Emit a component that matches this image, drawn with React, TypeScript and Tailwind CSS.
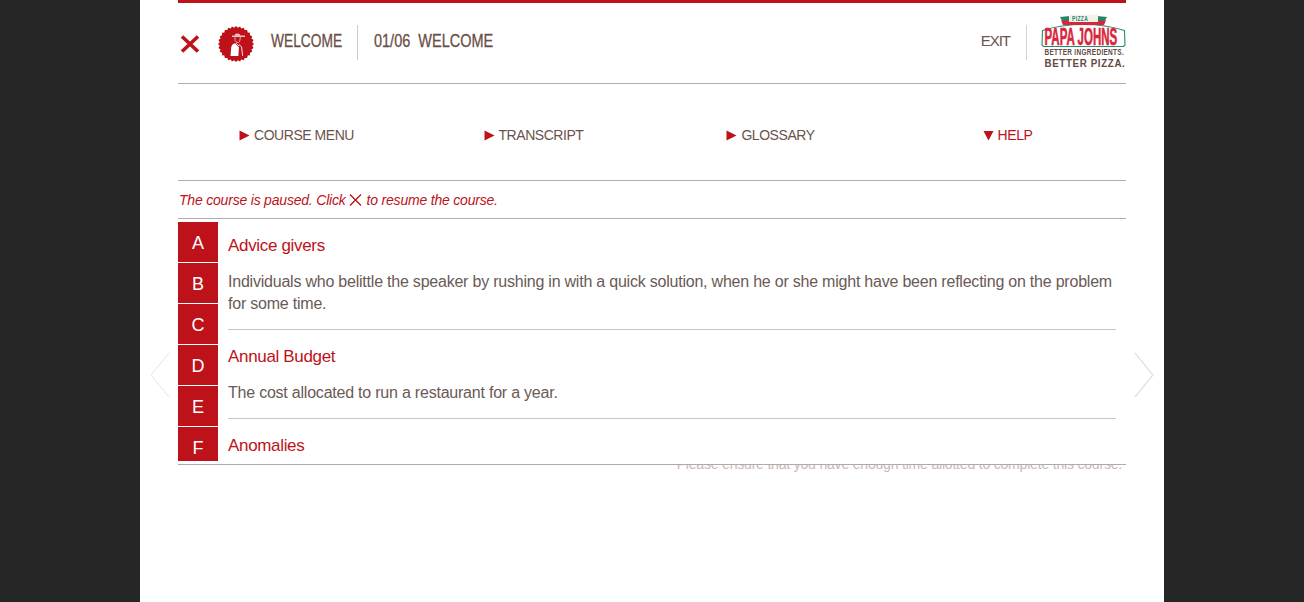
import React from 'react';

const font = { fontFamily: '"Liberation Sans", Arial, sans-serif' };

const sealPoints = Array.from({ length: 56 }, (_, i) => {
    const a = (i / 56) * Math.PI * 2;
    const r = i % 2 === 0 ? 18 : 16.4;
    return `${(18 + r * Math.cos(a)).toFixed(2)},${(18 + r * Math.sin(a)).toFixed(2)}`;
}).join(' ');

const Seal = () => (
    <svg width="36" height="36" viewBox="0 0 36 36" className="shrink-0">
        <polygon points={sealPoints} fill="#bd1219" />
        {/* hat */}
        <path d="M14 10.200h13" stroke="#fff" strokeWidth="1.100" />
        <path d="M16.500 9.800c0-3.200 5.500-3.200 6 0" fill="#f3c9ca" />
        {/* face */}
        <path d="M17 11v2.500c0 2 1.500 3 3 3 1 0 1.800-1 2-2.500l.3-3" fill="none" stroke="#f6dcdc" strokeWidth="0.700" />
        {/* body */}
        <path d="M12.500 30l.7-8.500c.3-2.800 2.300-4.300 4.800-4.500l3 2.500-.6 10.500z" fill="#fff" />
        <path d="M21 18.500l2.600 2.400 1 9" fill="none" stroke="#fff" strokeWidth="0.900" />
        <path d="M17.500 17.500l3.500 3.500" fill="none" stroke="#bd1219" strokeWidth="0.800" />
    </svg>
);

const Logo = () => (
    <svg width="86" height="56" viewBox="0 0 86 56" className="shrink-0">
        <path d="M1.500 16.500C14 12.500 28 10.500 42.500 10.500S71 12.500 83.500 16.500L84 31l-1.500 1.500h-80L1 31z" fill="#fff" stroke="#23896a" strokeWidth="1.100" />
        <path d="M19 3l10-1v6.500H22z" fill="#23896a" />
        <path d="M66 3l-10-1v6.500h7z" fill="#23896a" />
        <path d="M20 6.500h45l-2 4.500H22z" fill="#d8263c" />
        <path d="M28 0.500h29v7.500H28z" fill="#f4f1ea" />
        <text transform="translate(31 7) scale(0.62 1)" fontSize="8" fontWeight="700" letterSpacing="0.600" fill="#23896a" style={font}>PIZZA</text>
        <text transform="translate(3.500 30.500) scale(0.48 1)" fontSize="24" fontWeight="700" stroke="#d8263c" strokeWidth="0.600" fill="#d8263c" style={font}>PAPA JOHNS</text>
        <text transform="translate(3.500 41) scale(0.78 1)" fontSize="8.300" fontWeight="700" letterSpacing="0.400" fill="#5f4a44" style={font}>BETTER INGREDIENTS.</text>
        <text transform="translate(3.500 53) scale(0.89 1)" fontSize="11" fontWeight="700" letterSpacing="0.700" fill="#5f4a44" style={font}>BETTER PIZZA.</text>
    </svg>
);

const NavItem = ({ label, open }: { label: string; open?: boolean }) => (
    <div className="flex items-center justify-center">
        <svg width="11" height="11" viewBox="0 0 11 11" className="mr-[4px] shrink-0">
            {open ? <path d="M0.500 1h10L5.500 10.500z" fill="#bd1219" /> : <path d="M0.500 0.500L10.500 5.500L0.500 10.500z" fill="#bd1219" />}
        </svg>
        <span className={`text-[14px] tracking-[-0.45px] ${open ? 'text-[#bd1219]' : 'text-[#6a534c]'}`}>{label}</span>
    </div>
);

const letters = ['A', 'B', 'C', 'D', 'E', 'F'];

const Term = ({ children }: { children: React.ReactNode }) => (
    <h3 className="text-[17px] leading-[22px] tracking-[-0.33px] text-[#bd1219]">{children}</h3>
);

const Definition = ({ children }: { children: React.ReactNode }) => (
    <p className="text-[16px] leading-[22px] tracking-[-0.22px] text-[#6a5a56]">{children}</p>
);

export default function App() {
    return (
        <div className="h-[602px] overflow-hidden bg-[#262626] flex justify-center" style={font}>
            <div className="relative w-[1024px] h-full bg-white px-[38px]">
                <div className="h-[3px] bg-[#bd1219]" />

                <header className="h-[81px] border-b border-[#b3adad] flex items-center">
                    <svg width="22" height="20" viewBox="0 0 22 20" className="ml-px shrink-0 mt-px">
                        <path d="M3 2.500L19 17.500M19 2.500L3 17.500" stroke="#bd1219" strokeWidth="3.600" />
                    </svg>
                    <div className="ml-[17px] mt-px"><Seal /></div>
                    <div className="ml-[17px] w-[70px] -mt-[3px]">
                        <span className="block origin-left scale-x-[0.765] whitespace-nowrap text-[18px] font-medium text-[#6a4f46] [-webkit-text-stroke:0.3px_#6a4f46]">WELCOME</span>
                    </div>
                    <div className="ml-4 h-[35px] w-px bg-[#cfcaca] -mt-[2px]" />
                    <div className="ml-4 flex -mt-[3px] w-[120px]">
                        <span className="block origin-left scale-x-[0.805] whitespace-nowrap text-[18px] text-[#6a4f46] [-webkit-text-stroke:0.3px_#6a4f46]">01/06&nbsp; WELCOME</span>
                    </div>
                    <div className="ml-auto flex items-center">
                        <span className="text-[15px] tracking-[-1px] text-[#6a534c] -mt-[3px]">EXIT</span>
                        <div className="ml-4 h-[35px] w-px bg-[#d8d0d0] -mt-[2px]" />
                        <div className="ml-[14px] mt-[-3px] -mr-px"><Logo /></div>
                    </div>
                </header>

                <nav className="h-[97px] border-b border-[#b3adad] grid grid-cols-4 items-center pt-[7px]">
                    <NavItem label="COURSE MENU" />
                    <NavItem label="TRANSCRIPT" />
                    <NavItem label="GLOSSARY" />
                    <NavItem label="HELP" open />
                </nav>

                <div className="h-[38px] border-b border-[#b3adad] flex items-center pl-px pt-[2px] text-[14px] italic tracking-[-0.2px] text-[#bd1219]">
                    <span>The course is paused. Click</span>
                    <svg width="13" height="14" viewBox="0 0 13 14" className="ml-[3px] mr-[5px] -mt-[1px]">
                        <path d="M1 1.500L12 12.500M12 1.500L1 12.500" stroke="#bd1219" strokeWidth="1.300" />
                    </svg>
                    <span>to resume the course.</span>
                </div>

                <div className="relative z-10 h-[246px] border-b border-[#b5a8a8] bg-white pt-[3px]">
                    <div className="h-[239px] overflow-hidden flex">
                        <div className="w-10 shrink-0 flex flex-col gap-px">
                            {letters.map(l => (
                                <div key={l} className="h-10 shrink-0 bg-[#bd1219] text-white text-[18px] pt-[2px] flex items-center justify-center">{l}</div>
                            ))}
                        </div>
                        <div className="ml-[10px] mr-[10px] flex-1">
                            <div className="pt-[13px] pb-[14px] border-b border-[#c9c3c3]">
                                <Term>Advice givers</Term>
                                <div className="mt-[14px]">
                                    <Definition>Individuals who belittle the speaker by rushing in with a quick solution, when he or she might have been reflecting on the problem for some time.</Definition>
                                </div>
                            </div>
                            <div className="pt-[16px] pb-[14px] border-b border-[#c9c3c3]">
                                <Term>Annual Budget</Term>
                                <div className="mt-[14px]">
                                    <Definition>The cost allocated to run a restaurant for a year.</Definition>
                                </div>
                            </div>
                            <div className="pt-[16px]">
                                <Term>Anomalies</Term>
                            </div>
                        </div>
                    </div>
                </div>
                <p className="-mt-[10px] pr-[4px] text-right text-[14px] leading-[18px] tracking-[-0.19px] text-[#c4bab6]">Please ensure that you have enough time allotted to complete this course.</p>

                <svg width="20" height="46" viewBox="0 0 20 46" className="absolute left-[10px] top-[352px]">
                    <path d="M19 1L1 23L19 45" fill="none" stroke="#f1eeed" strokeWidth="1.200" />
                </svg>
                <svg width="20" height="46" viewBox="0 0 20 46" className="absolute right-[10px] top-[352px]">
                    <path d="M1 1L19 23L1 45" fill="none" stroke="#e6dfdc" strokeWidth="1.200" />
                </svg>
            </div>
        </div>
    );
}
